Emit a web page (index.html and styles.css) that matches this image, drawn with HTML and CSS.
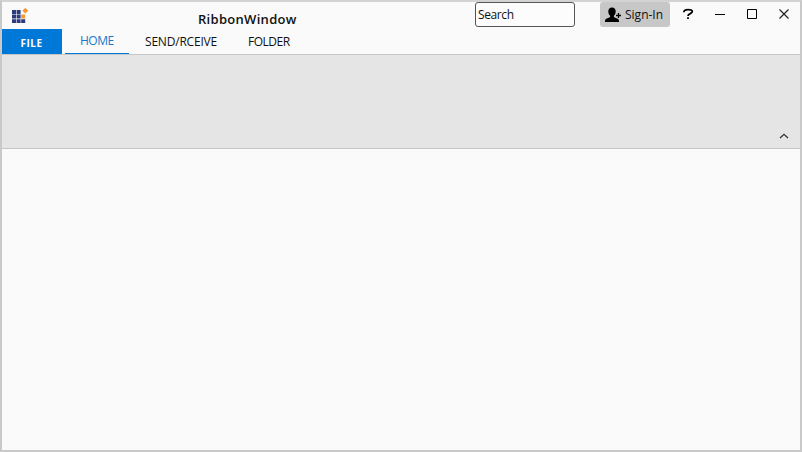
FILE: index.html
```
<!DOCTYPE html>
<html lang="en">
<head>
<meta charset="utf-8">
<title>RibbonWindow</title>
<link rel="stylesheet" href="styles.css">
</head>
<body>
<div class="window">
  <header class="titlebar">
    <svg class="logo" width="17" height="16" viewBox="0 0 17 16">
      <path fill="#2b3a7c" d="M0 2h4v4H0zM4.600 2h4v4h-4zM0 6.600h4v4H0zM4.600 6.600h4v4h-4zM0 11.200h4V15H0zM4.600 11.200h4V15h-4zM9.200 11.200h4V15h-4z"/>
      <path fill="#f49a31" d="M9.200 6.600h4v4h-4zM13.300-.2l2.900 2.900-2.900 2.900-2.900-2.900z"/>
    </svg>
    <h1 class="title">RibbonWindow</h1>
    <div class="search">Search</div>
    <div class="signin">
      <svg width="17" height="16" viewBox="0 0 17 16">
        <path d="M7 0.500c2.500 0 3.900 1.700 3.700 4.200C10.600 6.500 9.800 8 8.900 8.800v1.100c1 .8 3 1.100 4.200 2.100.8.700.9 1.800.9 3H0c0-1.200.1-2.300.9-3 1.200-1 3.200-1.300 4.200-2.100V8.800C4.200 8 3.400 6.500 3.300 4.700 3.100 2.200 4.500.5 7 .5z"/>
        <path d="M11 8.500h5M13.500 6v5" fill="none" stroke="#000" stroke-width="1.300"/>
      </svg>
      <span>Sign-In</span>
    </div>
    <svg class="controls" width="112" height="24" viewBox="0 0 112 24">
      <path d="M3.800 10.200C3.800 8.300 5.500 7.600 8 7.600c2.800 0 4.300.7 4.300 2 0 2-4.300 2-4.300 4.300M8 15.200v1.800" fill="none" stroke="#000" stroke-width="1.800"/>
      <path d="M35 12.500h10M67.500 7.500h9v9h-9z" fill="none" stroke="#000"/>
      <path d="M99.500 7.500l9 9m0-9l-9 9" fill="none" stroke="#222" stroke-width="1.200"/>
    </svg>
  </header>
  <nav class="tabs">
    <span class="file">FILE</span>
    <span class="tab active">HOME</span>
    <span class="tab send">SEND/RCEIVE</span>
    <span class="tab folder">FOLDER</span>
  </nav>
  <section class="ribbon">
    <svg width="10" height="6" viewBox="0 0 10 6"><path d="M1 5l4-3.700L9 5" fill="none" stroke="#333" stroke-width="1.300"/></svg>
  </section>
  <main class="content"></main>
</div>
</body>
</html>
```
FILE: styles.css
```
* { box-sizing: border-box; }
body { margin: 0; font-family: "Open Sans", "Noto Sans", sans-serif; font-size: 12px; color: #111; }
.window { width: 802px; height: 452px; border: 2px solid #c9c9c9; border-top-color: #d3d3d3; background: #fafafa; display: flex; flex-direction: column; overflow: hidden; }
.titlebar { height: 27px; display: flex; align-items: flex-start; flex: none; }
.logo { margin: 6px 0 0 10px; flex: none; }
.title { margin: 8px 0 0 169px; width: 277px; font-size: 13px; line-height: 18px; font-weight: 600; letter-spacing: 0.3px; white-space: nowrap; }
.search { width: 100px; height: 25px; border: 1px solid #555; border-radius: 3px; background: #fcfcfc; padding-left: 2px; line-height: 23px; letter-spacing: -0.4px; flex: none; }
.signin { margin-left: 25px; width: 70px; height: 25px; border-radius: 3px; background: #c7c7c7; display: flex; align-items: center; padding-left: 5px; gap: 3px; line-height: 25px; letter-spacing: 0; white-space: nowrap; flex: none; }
.signin svg { flex: none; }
.controls { margin-left: 10px; flex: none; }
.tabs { height: 26px; display: flex; flex: none; border-bottom: 1px solid #c6c6c6; line-height: 24px; }
.file { width: 60px; height: 25px; background: #0078d7; color: #fff; font-weight: 700; font-size: 10px; letter-spacing: 0.5px; text-align: center; line-height: 28px; padding-right: 1px; }
.tab { letter-spacing: -0.5px; white-space: nowrap; line-height: 26px; }
.active { margin-left: 3px; width: 64px; height: 25px; padding-left: 15px; color: #1979ca; box-shadow: inset 0 -1px #0078d7; line-height: 24px; }
.send { margin-left: 16px; width: 103px; letter-spacing: -0.2px; }
.ribbon { height: 94px; flex: none; background: #e5e5e5; border-bottom: 1px solid #c6c6c6; display: flex; align-items: flex-end; justify-content: flex-end; padding: 0 11px 9px 0; }
.content { flex: 1; }
```
